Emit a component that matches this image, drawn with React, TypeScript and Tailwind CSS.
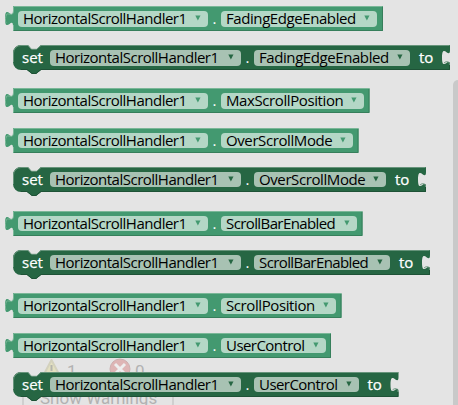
type BlockProps = { property: string; width: number; fieldWidth: number; top: string; spacing: string };

function Field({ text, width, setter, spacing }: { text: string; width: number; setter?: boolean; spacing: string }) {
  return (
    <div
      className={`flex h-[15.5px] shrink-0 items-start justify-between rounded-[4px] pr-[7px] pl-[5px] ${setter ? 'bg-[#a8c2b3]' : 'bg-[#b4d7c6]'}`}
      style={{ width }}
    >
      <span className={`-mt-px text-[15px] leading-4 text-black ${spacing}`}>{text}</span>
      <svg className={`mt-1 ${setter ? 'text-[#266643]' : 'text-[#439970]'}`} width="6" height="6" viewBox="0 0 6 6">
        <path d="M0.3 0.5h5.2L2.9 5.5z" fill="currentColor" />
      </svg>
    </div>
  );
}

const COMPONENT = 'HorizontalScrollHandler1';

function Getter({ property, width, fieldWidth, top, spacing }: BlockProps) {
  const w = width;
  return (
    <div className={`relative ml-[13px] flex h-[25px] shrink-0 items-start pt-[5px] pl-[5px] ${top}`} style={{ width }}>
      <svg className="absolute top-0 -left-2 overflow-visible" width={w + 8} height="25" viewBox={`-8 0 ${w + 8} 25`}>
        <path d={`M0 0H${w}V25H0V20C0 10 -8 28 -8 12.5S0 15 0 5Z`} fill="#439970" />
        <path d={`M.5 24.5V19M-7 17C-8 15 -7.5 10 -6.5 8.5C-5 6.5 .5 11 .5 5V.5H${w - 0.5}`} fill="none" stroke="#7bb798" />
        <path d={`M${w - 0.5} 1V24.5H1`} fill="none" stroke="#367f5b" />
      </svg>
      <div className="relative flex">
        <Field text={COMPONENT} width={190} spacing="tracking-[-0.5px]" />
        <span className="-mt-px w-[13px] text-center text-[15px] leading-4 text-white">.</span>
        <Field text={property} width={fieldWidth} spacing={spacing} />
      </div>
    </div>
  );
}

function Setter({ property, width, fieldWidth, top, spacing }: BlockProps) {
  const w = width;
  return (
    <div className={`relative ml-[13px] flex h-[25px] shrink-0 items-start pt-[5px] pl-[9px] ${top}`} style={{ width }}>
      <svg className="absolute top-0 left-0 overflow-visible" width={w} height="29" viewBox={`0 0 ${w} 29`}>
        <path
          d={`M0 8A8 8 0 0 1 8 0H15L18 4H24L28 0H${w}V5C${w} 15 ${w - 8} -3 ${w - 8} 12.5S${w} 10 ${w} 20V25H28L23 29H19L14 25H8A8 8 0 0 1 0 17Z`}
          fill="#266643"
        />
        <path d={`M.5 17V8A7.5 7.5 0 0 1 8 .5H15L18.5 4.3H23.5L28 .5H${w - 0.5}`} fill="none" stroke="#67947b" />
        <path d={`M${w - 0.5} 20V24.5H28L23 28.5H19L14 24.5H8`} fill="none" stroke="#1e5236" />
        <path d={`M${w - 6} 18C${w - 4} 16 ${w - 0.5} 16 ${w - 0.5} 20`} fill="none" stroke="#67947b" />
      </svg>
      <div className="relative flex">
        <span className="-mt-px w-7 text-[15px] leading-4 text-white [-webkit-text-stroke:0.25px_white]">set</span>
        <Field text={COMPONENT} width={191} setter spacing="tracking-[-0.5px]" />
        <span className="-mt-px w-[13px] text-center text-[15px] leading-4 text-white">.</span>
        <Field text={property} width={fieldWidth} setter spacing={spacing} />
        <span className="-mt-px pl-[9px] text-[15px] leading-4 text-white [-webkit-text-stroke:0.25px_white]">to</span>
      </div>
    </div>
  );
}

export default function App() {
  return (
    <main className="relative h-[405px] w-[458px] overflow-hidden bg-[#e4e4e4] font-['Open_Sans','Noto_Sans',sans-serif]">
      {/* Warning indicator dimmed beneath the open flyout */}
      <div className="absolute top-[358px] left-[22px] h-12 w-[152px] font-['Roboto',sans-serif] text-[#b2b2b2]">
        <svg className="absolute top-0 left-5" width="20" height="20" viewBox="0 0 20 20">
          <path d="M9.5 2L18 18H1Z" fill="#e3e0c0" stroke="#d3d1bd" strokeWidth="2" strokeLinejoin="round" />
          <path d="M9.5 7v6M9.5 15v2" stroke="#b4b4ac" strokeWidth="2" />
        </svg>
        <span className="absolute top-[3px] left-[45px] text-[17px] leading-5">1</span>
        <svg className="absolute top-0 left-[87px]" width="22" height="22" viewBox="0 0 22 22">
          <circle cx="11" cy="11" r="10" fill="#deb5b5" stroke="#cdb0b0" />
          <path d="M6 6l10 10M16 6L6 16" stroke="#eee" strokeWidth="3" />
        </svg>
        <span className="absolute top-[3px] left-[113px] text-[17px] leading-5">0</span>
        <div className="absolute top-[28px] left-0 h-[22px] w-[152px] rounded-sm border-2 border-[#cfcfcf]" />
        <span className="absolute top-[30px] left-[18px] text-[17px] leading-5 whitespace-nowrap">Show Warnings</span>
      </div>
      <div className="absolute top-[80px] left-[453px] h-[340px] w-[10px] rounded-full bg-[#c9c9c9]" />

      <div className="relative flex flex-col whitespace-nowrap">
        <Getter property="FadingEdgeEnabled" width={370} fieldWidth={156} top="mt-1.5" spacing="tracking-[-0.42px]" />
        <Setter property="FadingEdgeEnabled" width={437} fieldWidth={156} top="mt-[14px]" spacing="tracking-[-0.42px]" />
        <Getter property="MaxScrollPosition" width={356.5} fieldWidth={143} top="mt-[18.4px]" spacing="tracking-[-0.4px]" />
        <Getter property="OverScrollMode" width={345.5} fieldWidth={132} top="mt-[14.6px]" spacing="tracking-[-0.4px]" />
        <Setter property="OverScrollMode" width={413} fieldWidth={132} top="mt-[14px]" spacing="tracking-[-0.4px]" />
        <Getter property="ScrollBarEnabled" width={349.5} fieldWidth={136} top="mt-[19px]" spacing="tracking-[-0.6px]" />
        <Setter property="ScrollBarEnabled" width={417} fieldWidth={136} top="mt-[14px]" spacing="tracking-[-0.6px]" />
        <Getter property="ScrollPosition" width={328.5} fieldWidth={115} top="mt-[18.4px]" spacing="tracking-[-0.4px]" />
        <Getter property="UserControl" width={318} fieldWidth={104.5} top="mt-[14.6px]" spacing="tracking-[-0.55px]" />
        <Setter property="UserControl" width={385.5} fieldWidth={104.5} top="mt-[14px]" spacing="tracking-[-0.55px]" />
      </div>
    </main>
  );
}
